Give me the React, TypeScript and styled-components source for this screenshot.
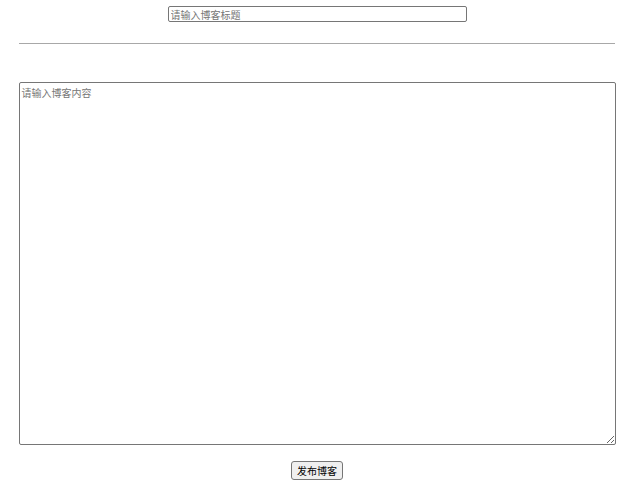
import React from "react"
import styled, { createGlobalStyle } from "styled-components"

const GlobalStyle = createGlobalStyle`
  body {
    margin: 0;
    background: #fff;
    font-family: "Noto Sans CJK SC", "Liberation Sans", sans-serif;
  }
`

const StyledPage = styled.div`
  width: 596px;
  margin-left: 19px;
  padding-top: 6px;
  display: flex;
  flex-direction: column;
  align-items: center;
`

const StyledTitleInput = styled.input`
  box-sizing: border-box;
  width: 299px;
  height: 16px;
  padding: 0 2px;
  border: 1px solid #767676;
  border-radius: 2px;
  font-size: 10px;
  font-family: "Noto Sans CJK SC", sans-serif;
  outline: none;
  ::placeholder { color: #6f6f6f; }
`

const StyledDivider = styled.hr`
  align-self: stretch;
  margin: 21px 0 0 0;
  border: none;
  border-top: 1px solid #a8a8a8;
  height: 0;
`

const StyledContent = styled.textarea`
  box-sizing: border-box;
  margin-top: 38px;
  width: 597px;
  height: 363px;
  padding: 2px;
  border: 1px solid #767676;
  border-radius: 2px;
  font-size: 10px;
  font-family: "Noto Sans CJK SC", sans-serif;
  resize: both;
  outline: none;
  ::placeholder { color: #6f6f6f; }
`

const StyledSubmit = styled.button`
  box-sizing: border-box;
  margin-top: 16px;
  height: 19px;
  padding: 0 5px;
  border: 1px solid #767676;
  border-radius: 3px;
  background: #efefef;
  font-size: 10px;
  font-weight: 400;
  font-family: "Noto Sans CJK SC", sans-serif;
  color: #000;
`

export default function App() {
  return (
    <>
      <GlobalStyle />
      <StyledPage>
        <StyledTitleInput placeholder="请输入博客标题" />
        <StyledDivider />
        <StyledContent placeholder="请输入博客内容" />
        <StyledSubmit>发布博客</StyledSubmit>
      </StyledPage>
    </>
  )
}
